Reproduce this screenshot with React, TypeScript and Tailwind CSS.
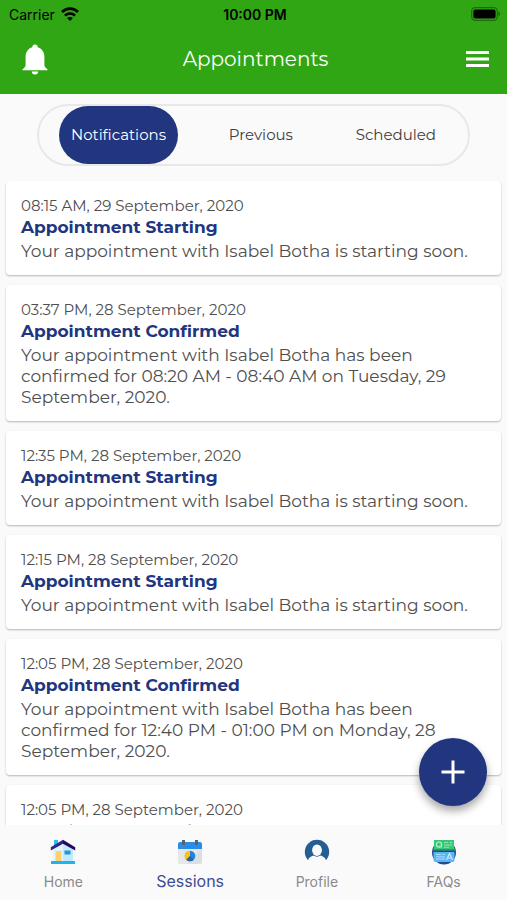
import { clsx } from "clsx";
import type { ReactNode } from "react";

type Notification = {
  time: string;
  title: string;
  message?: string;
};

const notifications: Notification[] = [
  {
    time: "08:15 AM, 29 September, 2020",
    title: "Appointment Starting",
    message: "Your appointment with Isabel Botha is starting soon.",
  },
  {
    time: "03:37 PM, 28 September, 2020",
    title: "Appointment Confirmed",
    message:
      "Your appointment with Isabel Botha has been confirmed for 08:20 AM - 08:40 AM on Tuesday, 29 September, 2020.",
  },
  {
    time: "12:35 PM, 28 September, 2020",
    title: "Appointment Starting",
    message: "Your appointment with Isabel Botha is starting soon.",
  },
  {
    time: "12:15 PM, 28 September, 2020",
    title: "Appointment Starting",
    message: "Your appointment with Isabel Botha is starting soon.",
  },
  {
    time: "12:05 PM, 28 September, 2020",
    title: "Appointment Confirmed",
    message:
      "Your appointment with Isabel Botha has been confirmed for 12:40 PM - 01:00 PM on Monday, 28 September, 2020.",
  },
  {
    time: "12:05 PM, 28 September, 2020",
    title: "Appointment Confirmed",
  },
];

const tabs = ["Notifications", "Previous", "Scheduled"];

function WifiIcon() {
  return (
    <svg className="h-[14px] w-[18px]" viewBox="0 0 18 14" fill="none" stroke="#000" strokeWidth="2.7">
      <path d="M1 5C5.400 .5 12.600 .5 17 5" />
      <path d="M4 8.600C6.800 5.800 11.200 5.800 14 8.600" />
      <path d="M9 14 6.100 11C7.800 9.500 10.200 9.500 11.900 11Z" fill="#000" stroke="none" />
    </svg>
  );
}

function BatteryIcon() {
  return (
    <svg className="h-[14px] w-[30px]" viewBox="0 0 30 14">
      <rect x=".7" y=".7" width="25.6" height="12.6" rx="3.6" fill="none" stroke="#1d6b0d" strokeWidth="1.2" />
      <rect x="2.4" y="2.4" width="22.2" height="9.2" rx="2" fill="#000" />
      <path d="M27.4 4.8c2.3.6 2.3 3.8 0 4.4Z" fill="#1d6b0d" />
    </svg>
  );
}

function BellIcon() {
  return (
    <svg className="h-[31px] w-[26px]" viewBox="0 0 26 31" fill="#fff">
      <path d="M13 .5a2.6 2.6 0 0 1 2.6 2.7c4.2 1.2 6.8 4.8 6.8 9.3v8.6c0 1.2.6 2 1.5 2.8l1.6 1.4v1H.5v-1l1.6-1.4c.9-.8 1.5-1.6 1.5-2.8v-8.6c0-4.5 2.6-8.1 6.8-9.3A2.6 2.6 0 0 1 13 .5Z" />
      <path d="M9.8 27.6h6.4a3.2 2.9 0 0 1-6.4 0Z" />
    </svg>
  );
}

function MenuIcon() {
  return (
    <svg className="h-4 w-[23px]" viewBox="0 0 23 16" fill="#fff">
      <path d="M0 0h23v3H0zM0 6.5h23v3H0zM0 13h23v3H0z" />
    </svg>
  );
}

function HomeIcon() {
  return (
    <svg className="size-[26px]" viewBox="0 0 26 26">
      <path d="M4 1h4v7H4z" fill="#27c0f5" />
      <path d="M3 10 13 3l10 7v12H3z" fill="#e1f5fe" />
      <path d="M13 3l10 7v12H13z" fill="#c3e9fb" />
      <path d="M5.500 12h6v10h-6z" fill="#ffd071" />
      <path d="M14.500 11.500h6v4h-6z" fill="#1f98dc" />
      <path d="M1 22h24v3H1z" fill="#1eb4ee" />
      <path d="M13 .8.8 8.200V11.500L13 4.800z" fill="#32248a" />
      <path d="M13 .8l12.200 7.400V11.500L13 4.800z" fill="#25085c" />
    </svg>
  );
}

function SessionsIcon() {
  return (
    <svg className="size-[26px]" viewBox="0 0 26 26">
      <path d="M1 9h24v14a2 2 0 0 1-2 2H3a2 2 0 0 1-2-2z" fill="#e5e7e9" />
      <path d="M25 9v14a2 2 0 0 1-2 2H10z" fill="#d6dade" opacity=".65" />
      <path d="M3 3h20a2 2 0 0 1 2 2v5H1V5a2 2 0 0 1 2-2z" fill="#2a8ce4" />
      <path d="M5 1h3v5H5zM18 1h3v5h-3z" fill="#526477" />
      <circle cx="13" cy="17" r="5.3" fill="#2583d5" />
      <path d="M13 11.7V17l-3.7 3.8A5.3 5.3 0 0 1 13 11.7z" fill="#f9c51d" />
      <path d="M9.3 20.8 13 17l3.7 3.8a5.3 5.3 0 0 1-7.4 0z" fill="#2866a5" />
    </svg>
  );
}

function ProfileIcon() {
  return (
    <svg className="size-[26px]" viewBox="0 0 26 26">
      <path
        d="M4 21.3A12.2 12.2 0 1 1 22 21.3c-.7-2.5-2.9-4-5.5-4.7-2 1.4-5 1.4-7 0-2.6.7-4.8 2.2-5.5 4.7Z"
        fill="#235f94"
      />
      <ellipse cx="13" cy="11.2" rx="4.9" ry="5.8" fill="#fafafa" />
    </svg>
  );
}

function FaqIcon() {
  return (
    <svg className="size-[26px]" viewBox="0 0 26 26">
      <circle cx="13" cy="13.5" r="12" fill="#214b8c" />
      <path d="M3 1h20v9.500H3z" fill="#38c777" />
      <path d="M3 10.500h20l1-2v3H2v-3z" fill="#2aa765" />
      <circle cx="8" cy="5.600" r="2.600" fill="none" stroke="#b9f0cf" strokeWidth="1.2" />
      <path d="m8.500 6.500 2.500 2.300M13 3.500h4M18.500 3.500H21M13 6h8M13 8.300h5" fill="none" stroke="#8ce5af" strokeWidth="1" />
      <path d="M2.500 13h21v8a2 2 0 0 1-2 2h-17a2 2 0 0 1-2-2z" fill="#58b5f4" />
      <path d="M5 15.500h5M11.500 15.500H14M5 17.800h9M5 20h9" stroke="#a9dcff" strokeWidth="1" />
      <path d="m15.500 21 3-6.500 3 6.500M16.500 19h4" fill="none" stroke="#c8eaff" strokeWidth="1.2" />
    </svg>
  );
}

const navItems: { label: string; icon: ReactNode; active?: boolean }[] = [
  { label: "Home", icon: <HomeIcon /> },
  { label: "Sessions", icon: <SessionsIcon />, active: true },
  { label: "Profile", icon: <ProfileIcon /> },
  { label: "FAQs", icon: <FaqIcon /> },
];

function NotificationCard({ time, title, message }: Notification) {
  return (
    <article className="rounded bg-white px-[15px] pt-[14px] pb-[13px] shadow-[0_1px_2px_rgba(0,0,0,0.28)]">
      <p className="text-[15px] leading-[21px] text-[#4f4f4f]">{time}</p>
      <h2 className="text-[17px] leading-[23px] font-bold text-[#22357f]">{title}</h2>
      {message && <p className="mt-0.5 text-[17px] leading-[21px] text-[#4f4f4f]">{message}</p>}
    </article>
  );
}

export default function App() {
  return (
    <div className="flex h-screen flex-col overflow-hidden bg-[#fafafa] font-['Montserrat','Inter',sans-serif]">
      <header className="shrink-0 bg-[#30a614]">
        <div className="grid h-7 grid-cols-3 items-center pr-[6px] pl-[9px] font-['Inter',sans-serif] text-[14px] text-black">
          <div className="flex items-center gap-[6px]">
            Carrier
            <WifiIcon />
          </div>
          <div className="text-center font-semibold">10:00 PM</div>
          <div className="flex justify-end">
            <BatteryIcon />
          </div>
        </div>
        <div className="grid h-[66px] grid-cols-[1fr_auto_1fr] items-center pr-[18px] pb-1 pl-[22px]">
          <button aria-label="Notifications" className="justify-self-start">
            <BellIcon />
          </button>
          <h1 className="text-[20px] text-white">Appointments</h1>
          <button aria-label="Menu" className="justify-self-end">
            <MenuIcon />
          </button>
        </div>
      </header>

      <div className="relative flex min-h-0 flex-1 flex-col">
        <div
          role="tablist"
          className="mx-[37px] mt-[10px] mb-[15px] flex h-[62px] shrink-0 justify-between rounded-full border-2 border-[#e8e8e8] px-5"
        >
          {tabs.map((tab, i) => (
            <button
              key={tab}
              role="tab"
              aria-selected={i === 0}
              className={clsx(
                "rounded-full px-3 text-[15px]",
                i === 0 ? "bg-[#22357f] text-white" : "text-[#3d3d3d]",
              )}
            >
              {tab}
            </button>
          ))}
        </div>

        <main className="flex min-h-0 flex-1 flex-col gap-[10px] overflow-y-auto px-[6px] [scrollbar-width:none] *:shrink-0">
          {notifications.map((item, i) => (
            <NotificationCard key={i} {...item} />
          ))}
        </main>

        <button
          aria-label="New appointment"
          className="absolute right-5 bottom-[19px] flex size-[68px] items-center justify-center rounded-full bg-[#22357f] shadow-[0_5px_9px_rgba(0,0,0,0.35)]"
        >
          <svg className="size-6" viewBox="0 0 24 24" fill="none" stroke="#fff" strokeWidth="3">
            <path d="M12 .5v23M.5 12h23" />
          </svg>
        </button>
      </div>

      <nav className="grid h-[75px] shrink-0 grid-cols-4 bg-[#fafafa] font-['Inter',sans-serif]">
        {navItems.map(({ label, icon, active }) => (
          <a
            key={label}
            href="#"
            aria-current={active ? "page" : undefined}
            className={clsx(
              "flex flex-col items-center pt-[14px]",
              active ? "gap-1 text-[16px] text-[#3d4c93]" : "gap-[5px] text-[14px] text-[#8a8a8a]",
            )}
          >
            {icon}
            <span className="leading-6">{label}</span>
          </a>
        ))}
      </nav>
    </div>
  );
}
